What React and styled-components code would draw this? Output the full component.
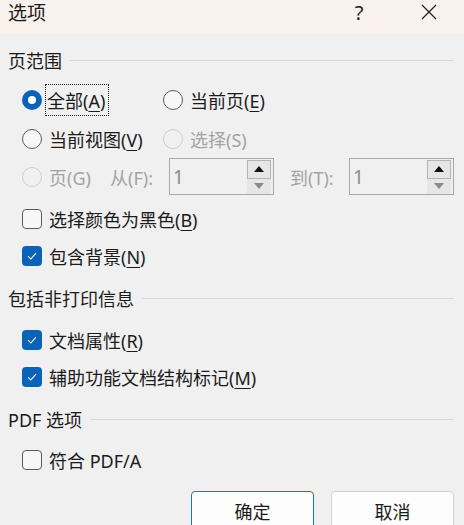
import styled, { createGlobalStyle } from "styled-components";

const GlobalStyle = createGlobalStyle`
  body {
    margin: 0;
    background: #f0f0f0;
  }
`

const Dialog = styled.div`
    width: 464px;
    height: 525px;
    overflow: hidden;
    background: #f0f0f0;
    color: #1b1b1b;
    font-family: "Noto Sans", "Noto Sans CJK SC", sans-serif;
    font-size: 18px;
`
const TitleBar = styled.div`
    height: 33px;
    box-sizing: border-box;
    padding: 0 0 9px 8px;
    display: flex;
    align-items: center;
    background: #f9f1ec;
    font-size: 19px;
`
const Title = styled.span`
    flex: 1;
`
const TitleButton = styled.div`
    width: 70px;
    height: 24px;
    display: flex;
    align-items: center;
    justify-content: center;
    font-size: 20px;
    color: #222;
`
const Body = styled.div`
    padding: 0 10px 0 8px;
`
const Header = styled.div`
    height: 26px;
    margin-top: ${p => p.$mt}px;
    display: flex;
    align-items: center;
    gap: 8px;
    &::after {
        content: "";
        flex: 1;
        height: 1px;
        background: #d9d9d9;
    }
`
const Row = styled.div`
    height: 37px;
    margin-top: ${p => p.$mt || 0}px;
    padding-left: 14px;
    display: flex;
    align-items: center;
`
const Option = styled.label`
    width: ${p => p.$w ? p.$w + "px" : "auto"};
    display: flex;
    align-items: center;
    gap: 7px;
    color: ${p => p.$disabled ? "#a3a3a3" : "#1b1b1b"};
    flex-shrink: 0;
`
const Radio = styled.span`
    width: 20px;
    height: 20px;
    box-sizing: border-box;
    border-radius: 50%;
    flex-shrink: 0;
    border: ${p => p.$checked ? "none" : p.$disabled ? "1px solid #cdcdcd" : "1px solid #5d5d5d"};
    background: ${p => p.$checked ? "#0a63b8" : p.$disabled ? "#f0f0f0" : "#f7f7f7"};
    display: flex;
    align-items: center;
    justify-content: center;
    &::after {
        content: "";
        display: ${p => p.$checked ? "block" : "none"};
        width: 8px;
        height: 8px;
        border-radius: 50%;
        background: #fff;
    }
`
const Check = styled.span`
    width: 20px;
    height: 20px;
    box-sizing: border-box;
    border-radius: 4px;
    flex-shrink: 0;
    border: ${p => p.$checked ? "none" : "1px solid #5d5d5d"};
    background: ${p => p.$checked ? "#0a63b8" : "#f7f7f7"};
    display: flex;
    align-items: center;
    justify-content: center;
`
const Focus = styled.span`
    outline: 1px dotted #222;
    outline-offset: 0;
    padding: 2px 3px 2px 1px;
    margin-left: -3px;
`
const Key = styled.u`
    text-underline-offset: 3px;
    text-decoration-thickness: 1px;
`
const FieldLabel = styled.span`
    width: ${p => p.$w}px;
    flex-shrink: 0;
    color: #a3a3a3;
`
const SpinBox = styled.div`
    width: 105px;
    height: 37px;
    box-sizing: border-box;
    border: 1px solid #a8a8a8;
    display: flex;
    align-items: center;
    padding: 0 2px 0 3px;
    flex-shrink: 0;
    margin-right: ${p => p.$mr || 0}px;
`
const SpinValue = styled.span`
    flex: 1;
    color: #8c8c8c;
    font-size: 19px;
`
const SpinButtons = styled.div`
    width: 24px;
    display: flex;
    flex-direction: column;
`
const SpinButton = styled.div`
    height: ${p => p.$up ? 19 : 15}px;
    box-sizing: border-box;
    background: #e6e6e6;
    border: 1px solid ${p => p.$up ? "#b4b4b4" : "#e6e6e6"};
    display: flex;
    align-items: center;
    justify-content: center;
`
const Footer = styled.div`
    margin-top: 13px;
    display: flex;
    justify-content: flex-end;
    gap: 17px;
`
const Button = styled.button`
    width: 123px;
    height: 38px;
    box-sizing: border-box;
    border-radius: 4px;
    background: #fdfdfd;
    border: 1px solid ${p => p.$primary ? "#1e74b5" : "#d2d2d2"};
    font-family: inherit;
    font-size: 18px;
    color: #1b1b1b;
    padding-top: 2px;
`

const CheckMark = () => (
    <svg width="12" height="10" viewBox="0 0 12 10">
        <path d="M2 5.2 L4.8 8 L10 2.2" fill="none" stroke="#fff" strokeWidth="1.1" />
    </svg>
)

const Arrow = ({ up }) => (
    <svg width="10" height="6" viewBox="0 0 10 6">
        <path d={up ? "M0 6 L5 0 L10 6 Z" : "M0 0 L5 6 L10 0 Z"} fill={up ? "#111" : "#8a8a8a"} />
    </svg>
)

const Spin = ({ mr }) => (
    <SpinBox $mr={mr}>
        <SpinValue>1</SpinValue>
        <SpinButtons>
            <SpinButton $up><Arrow up /></SpinButton>
            <SpinButton><Arrow /></SpinButton>
        </SpinButtons>
    </SpinBox>
)

const CloseIcon = () => (
    <svg width="16" height="16" viewBox="0 0 16 16">
        <path d="M1 1 L15 15 M15 1 L1 15" stroke="#222" strokeWidth="1.3" />
    </svg>
)

const App = () => {
    return (
        <Dialog>
            <GlobalStyle />
            <TitleBar>
                <Title>选项</Title>
                <TitleButton>?</TitleButton>
                <TitleButton><CloseIcon /></TitleButton>
            </TitleBar>
            <Body>
                <Header $mt={14}>页范围</Header>
                <Row $mt={8}>
                    <Option $w={141}>
                        <Radio $checked />
                        <Focus>全部(<Key>A</Key>)</Focus>
                    </Option>
                    <Option>
                        <Radio />
                        <span>当前页(<Key>E</Key>)</span>
                    </Option>
                </Row>
                <Row $mt={2}>
                    <Option $w={141}>
                        <Radio />
                        <span>当前视图(<Key>V</Key>)</span>
                    </Option>
                    <Option $disabled>
                        <Radio $disabled />
                        <span>选择(S)</span>
                    </Option>
                </Row>
                <Row $mt={1}>
                    <Option $w={88} $disabled>
                        <Radio $disabled />
                        <span>页(G)</span>
                    </Option>
                    <FieldLabel $w={59}>从(F):</FieldLabel>
                    <Spin mr={16} />
                    <FieldLabel $w={59}>到(T):</FieldLabel>
                    <Spin />
                </Row>
                <Row $mt={5}>
                    <Option>
                        <Check />
                        <span>选择颜色为黑色(<Key>B</Key>)</span>
                    </Option>
                </Row>
                <Row>
                    <Option>
                        <Check $checked><CheckMark /></Check>
                        <span>包含背景(<Key>N</Key>)</span>
                    </Option>
                </Row>
                <Header $mt={11}>包括非打印信息</Header>
                <Row $mt={10}>
                    <Option>
                        <Check $checked><CheckMark /></Check>
                        <span>文档属性(<Key>R</Key>)</span>
                    </Option>
                </Row>
                <Row>
                    <Option>
                        <Check $checked><CheckMark /></Check>
                        <span>辅助功能文档结构标记(<Key>M</Key>)</span>
                    </Option>
                </Row>
                <Header $mt={11}>PDF 选项</Header>
                <Row $mt={9}>
                    <Option>
                        <Check />
                        <span>符合 PDF/A</span>
                    </Option>
                </Row>
                <Footer>
                    <Button $primary>确定</Button>
                    <Button>取消</Button>
                </Footer>
            </Body>
        </Dialog>
    )
}

export default App
